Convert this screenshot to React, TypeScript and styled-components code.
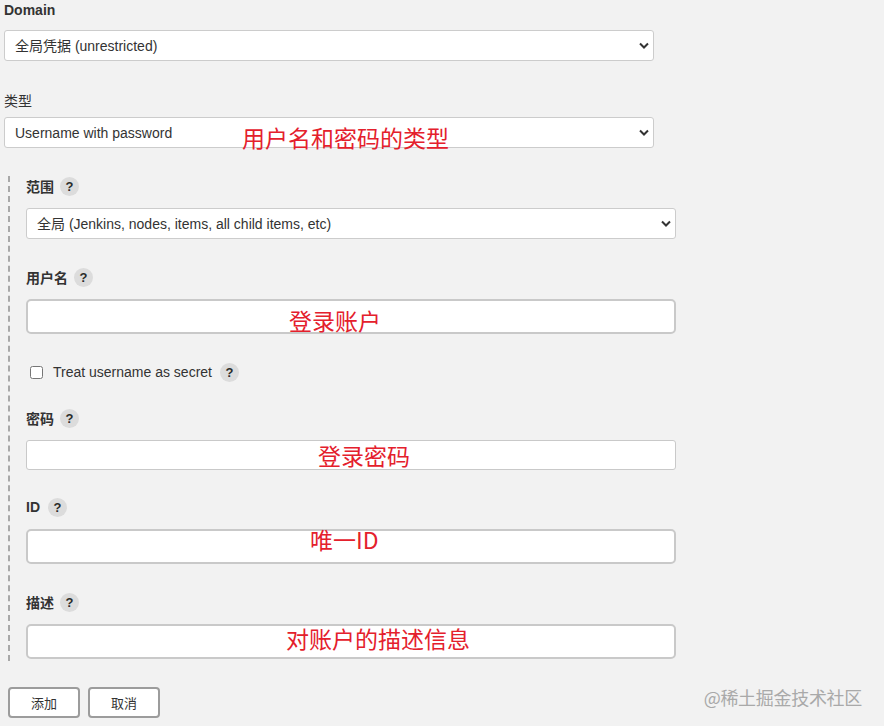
import React from 'react';
import styled, { createGlobalStyle } from 'styled-components';

const GlobalStyle = createGlobalStyle`
  html, body {
    margin: 0;
    padding: 0;
    background: #f2f2f2;
  }
  body {
    font-family: "Liberation Sans", "Noto Sans CJK SC", Arial, sans-serif;
    color: #333;
  }
`;

const Page = styled.div`
  position: relative;
  width: 884px;
  height: 726px;
  padding: 1px 0 0 4px;
  box-sizing: border-box;
  overflow: hidden;
`;

const Field = styled.div<{ $top: number; $gap: number }>`
  margin-top: ${(p) => p.$top}px;
  display: flex;
  flex-direction: column;
  gap: ${(p) => p.$gap}px;
`;

const Label = styled.div<{ $light?: boolean }>`
  display: flex;
  align-items: center;
  height: 18px;
  font-size: 14px;
  font-weight: ${(p) => (p.$light ? 400 : 700)};
  color: #333;
`;

const Help = styled.span<{ $gap?: number }>`
  display: inline-flex;
  align-items: center;
  justify-content: center;
  width: 19px;
  height: 19px;
  margin-left: ${(p) => p.$gap ?? 6}px;
  border-radius: 50%;
  background: #dcdcdc;
  font-size: 13px;
  font-weight: 700;
  color: #2b2b2b;
`;

const Box = styled.div`
  position: relative;
  width: 650px;
`;

const Select = styled.select`
  appearance: none;
  width: 100%;
  height: 31px;
  padding: 0 30px 0 10px;
  border: 1px solid #cccccc;
  border-radius: 3px;
  background: #fff;
  font-family: inherit;
  font-size: 14px;
  color: #333;
  outline: none;
`;

const Chevron = styled.svg`
  position: absolute;
  right: 5px;
  top: 12px;
  width: 10px;
  height: 8px;
  pointer-events: none;
`;

const Input = styled.input<{ $thin?: boolean }>`
  display: block;
  width: 100%;
  box-sizing: border-box;
  height: ${(p) => (p.$thin ? 30 : 35)}px;
  border: ${(p) => (p.$thin ? '1px' : '2px')} solid #c9c9c9;
  border-radius: ${(p) => (p.$thin ? 3 : 5)}px;
  background: #fff;
  outline: none;
  font-size: 14px;
`;

const Note = styled.span<{ $left: number; $top: number }>`
  position: absolute;
  left: ${(p) => p.$left}px;
  top: ${(p) => p.$top}px;
  font-family: "Noto Sans CJK SC", sans-serif;
  font-size: 23px;
  line-height: 23px;
  color: #e4202c;
  pointer-events: none;
  white-space: nowrap;
`;

const Nested = styled.div`
  margin: 28px 0 0 4px;
  padding: 1px 0 2px 16px;
  border-left: 2px dashed #a8a8a8;
`;

const CheckRow = styled.label`
  display: flex;
  align-items: center;
  height: 18px;
  margin-top: 29px;
  font-size: 14px;
  color: #333;

  input {
    width: 13px;
    height: 13px;
    margin: 0 10px 0 4px;
  }
`;

const Buttons = styled.div`
  display: flex;
  gap: 8px;
  margin: 26px 0 0 4px;
`;

const Button = styled.button`
  width: 72px;
  height: 31px;
  border: 2px solid #9c9c9c;
  border-radius: 4px;
  background: #fff;
  font-family: "Noto Sans CJK SC", sans-serif;
  font-size: 13px;
  color: #333;
`;

const Watermark = styled.div`
  position: absolute;
  right: 22px;
  top: 684px;
  font-family: "Noto Sans CJK SC", sans-serif;
  font-size: 18px;
  color: #a9a9a9;
  letter-spacing: -0.3px;
`;

const SelectBox: React.FC<{ value: string; note?: React.ReactNode }> = ({ value, note }) => (
  <Box>
    <Select defaultValue={value}>
      <option>{value}</option>
    </Select>
    <Chevron viewBox="0 0 10 8">
      <path d="M1 1.5 L5 5.5 L9 1.5" fill="none" stroke="#333" strokeWidth="2" />
    </Chevron>
    {note}
  </Box>
);

const App: React.FC = () => (
  <>
    <GlobalStyle />
    <Page>
      <Field $top={0} $gap={11}>
        <Label>Domain</Label>
        <SelectBox value="全局凭据 (unrestricted)" />
      </Field>

      <Field $top={30} $gap={8}>
        <Label $light>类型</Label>
        <SelectBox
          value="Username with password"
          note={<Note $left={238} $top={9}>用户名和密码的类型</Note>}
        />
      </Field>

      <Nested>
        <Field $top={0} $gap={13}>
          <Label>范围<Help>?</Help></Label>
          <SelectBox value="全局 (Jenkins, nodes, items, all child items, etc)" />
        </Field>

        <Field $top={29} $gap={13}>
          <Label>用户名<Help>?</Help></Label>
          <Box>
            <Input />
            <Note $left={263} $top={10}>登录账户</Note>
          </Box>
        </Field>

        <CheckRow>
          <input type="checkbox" />
          Treat username as secret
          <Help $gap={8}>?</Help>
        </CheckRow>

        <Field $top={28} $gap={13}>
          <Label>密码<Help>?</Help></Label>
          <Box>
            <Input $thin type="password" />
            <Note $left={292} $top={4}>登录密码</Note>
          </Box>
        </Field>

        <Field $top={28} $gap={13}>
          <Label>ID<Help $gap={8}>?</Help></Label>
          <Box>
            <Input />
            <Note $left={284} $top={-1}>唯一ID</Note>
          </Box>
        </Field>

        <Field $top={29} $gap={13}>
          <Label>描述<Help>?</Help></Label>
          <Box>
            <Input />
            <Note $left={260} $top={3}>对账户的描述信息</Note>
          </Box>
        </Field>
      </Nested>

      <Buttons>
        <Button>添加</Button>
        <Button>取消</Button>
      </Buttons>

      <Watermark>@稀土掘金技术社区</Watermark>
    </Page>
  </>
);

export default App;
